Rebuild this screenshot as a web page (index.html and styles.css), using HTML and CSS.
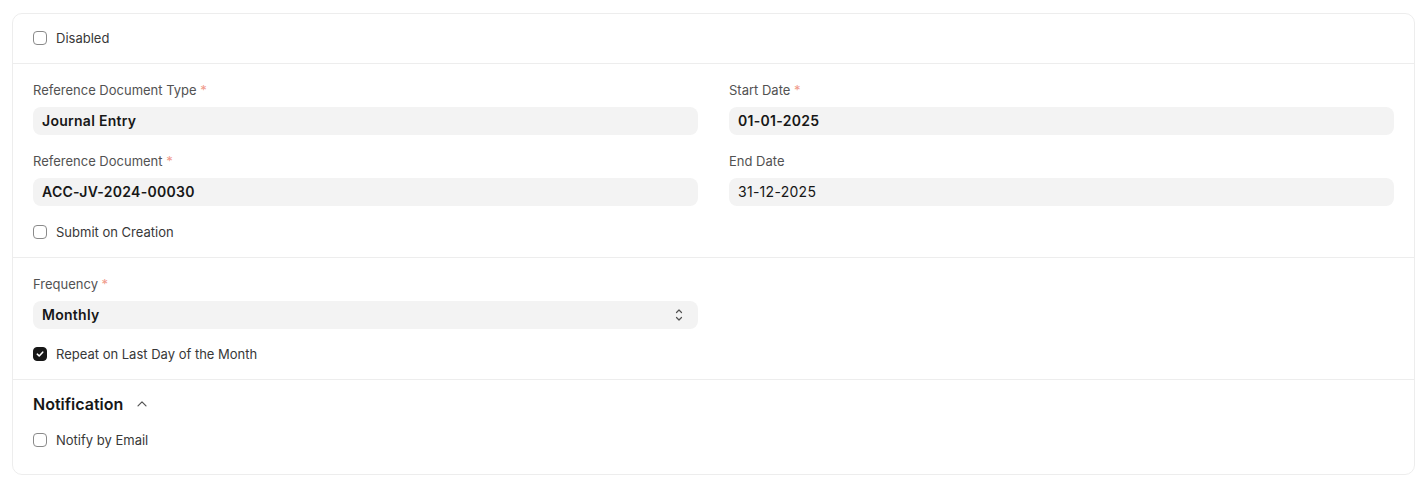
FILE: index.html
```html
<!DOCTYPE html>
<html lang="en">
<head>
<meta charset="utf-8">
<title>Auto Repeat</title>
<link rel="stylesheet" href="styles.css">
</head>
<body>
<div class="card">
  <section class="section sec-first">
    <label class="check">
      <span class="box"></span>
      <span class="check-label">Disabled</span>
    </label>
  </section>

  <section class="section sec-main">
    <div class="cols">
      <div class="col">
        <div class="field">
          <div class="label reqd">Reference Document Type</div>
          <div class="input bold">Journal Entry</div>
        </div>
        <div class="field">
          <div class="label reqd">Reference Document</div>
          <div class="input bold">ACC-JV-2024-00030</div>
        </div>
        <label class="check check-after check-doc">
          <span class="box"></span>
          <span class="check-label">Submit on Creation</span>
        </label>
      </div>
      <div class="col">
        <div class="field">
          <div class="label reqd">Start Date</div>
          <div class="input bold">01-01-2025</div>
        </div>
        <div class="field">
          <div class="label">End Date</div>
          <div class="input">31-12-2025</div>
        </div>
      </div>
    </div>
  </section>

  <section class="section sec-main">
    <div class="cols">
      <div class="col">
        <div class="field">
          <div class="label reqd">Frequency</div>
          <div class="input bold select">
            <span>Monthly</span>
            <svg class="sel-icon" width="10" height="14" viewBox="0 0 10 14" fill="none" stroke="#525252" stroke-width="1.2" stroke-linecap="round" stroke-linejoin="round"><path d="M2.5 4.5 L5 2 L7.5 4.5"/><path d="M2.5 9.5 L5 12 L7.5 9.5"/></svg>
          </div>
        </div>
        <label class="check check-after">
          <span class="box checked">
            <svg width="10" height="10" viewBox="0 0 10 10" fill="none" stroke="#fff" stroke-width="1.6" stroke-linecap="round" stroke-linejoin="round"><path d="M2.3 5.2 L4.2 7 L7.7 3.2"/></svg>
          </span>
          <span class="check-label">Repeat on Last Day of the Month</span>
        </label>
      </div>
      <div class="col"></div>
    </div>
  </section>

  <section class="section sec-last">
    <div class="sec-head">
      <span class="sec-title">Notification</span>
      <svg class="collapse-icon" width="14" height="14" viewBox="0 0 14 14" fill="none" stroke="#525252" stroke-width="1.2" stroke-linecap="round" stroke-linejoin="round"><path d="M3 8.8 L7 4.8 L11 8.8"/></svg>
    </div>
    <label class="check">
      <span class="box"></span>
      <span class="check-label">Notify by Email</span>
    </label>
  </section>
</div>
</body>
</html>
```

FILE: styles.css
```css
* { box-sizing: border-box; }
html, body { background: #ffffff; }
body {
  margin: 13px 11px 0 12px;
  font-family: Inter, "Noto Sans", sans-serif;
  color: #171717;
  -webkit-font-smoothing: antialiased;
}
.card {
  border: 1px solid #ededed;
  border-radius: 10px;
  background: #fff;
}
.section {
  border-top: 1px solid #ededed;
  padding: 18px 20px 16px;
}
.section:first-child { border-top: none; }
.sec-first { padding: 15px 20px 16px; }
.cols {
  display: grid;
  grid-template-columns: 1fr 1fr;
  column-gap: 31px;
}
.col { display: flex; flex-direction: column; }
.field { margin-bottom: 18px; }
.col > .field:last-child { margin-bottom: 0; }
.label {
  font-size: 13px;
  line-height: 17px;
  color: #525252;
  margin-bottom: 8px;
}
.reqd::after {
  content: " *";
  color: #f09a8a;
}
.input {
  height: 28px;
  border-radius: 8px;
  background: #f3f3f3;
  padding: 0 9px;
  font-size: 14px;
  line-height: 28px;
  letter-spacing: 0.02em;
  color: #171717;
  font-weight: 400;
}
.input.bold { font-weight: 600; }
.select {
  display: flex;
  align-items: center;
  justify-content: space-between;
  padding-right: 14px;
}
.sel-icon { display: block; }
.check {
  display: flex;
  align-items: center;
  height: 18px;
  gap: 9px;
}
.check-after { margin-top: -2px; }
.check-doc { margin-top: -1px; }
.box {
  width: 14px;
  height: 14px;
  border: 1px solid #8a8a8a;
  border-radius: 4px;
  background: #fff;
  flex: none;
  display: flex;
  align-items: center;
  justify-content: center;
}
.box.checked {
  background: #171717;
  border-color: #171717;
}
.box svg { display: block; }
.check-label {
  font-size: 13px;
  color: #383838;
  line-height: 18px;
}
.sec-last { padding: 14px 20px 25px; }
.sec-head {
  display: flex;
  align-items: center;
  gap: 12px;
  height: 20px;
  margin-bottom: 17px;
}
.sec-title {
  font-size: 16px;
  font-weight: 600;
  color: #171717;
  line-height: 20px;
}
.collapse-icon { display: block; }
```
